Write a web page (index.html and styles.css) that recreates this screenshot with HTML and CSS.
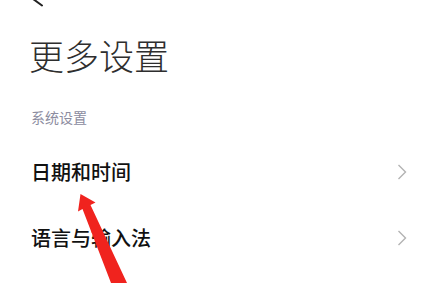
FILE: index.html
```html
<!DOCTYPE html>
<html lang="zh-CN">
<head>
<meta charset="utf-8">
<title>更多设置</title>
<link rel="stylesheet" href="styles.css">
</head>
<body>
<div class="page">
  <div class="header">
    <svg class="back" width="20" height="10" viewBox="0 0 20 10"><path d="M1 -4 L 14 5.5" stroke="#222" stroke-width="2" fill="none" stroke-linecap="round"/></svg>
  </div>
  <h1 class="title">更多设置</h1>
  <div class="section-label">系统设置</div>
  <div class="row">
    <span class="row-text">日期和时间</span>
    <svg class="chev" width="10" height="16" viewBox="0 0 10 16"><path d="M1.5 1 L8.5 8 L1.5 15" fill="none" stroke="#b3b3b3" stroke-width="1.4"/></svg>
  </div>
  <div class="row">
    <span class="row-text">语言与输入法</span>
    <svg class="chev" width="10" height="16" viewBox="0 0 10 16"><path d="M1.5 1 L8.5 8 L1.5 15" fill="none" stroke="#b3b3b3" stroke-width="1.4"/></svg>
  </div>
  <svg class="red-arrow" width="424" height="283" viewBox="0 0 424 283"><polygon points="80.5,194 95.5,202.5 90.5,205 127,283 111,283 82.5,209 78,211.5" fill="#f0231e"/></svg>
</div>
</body>
</html>
```
FILE: styles.css
```css
html, body {
  margin: 0;
  padding: 0;
  background: #ffffff;
}
body {
  font-family: "Noto Sans CJK SC", "Noto Sans", sans-serif;
  width: 424px;
  height: 283px;
  overflow: hidden;
}
.page {
  position: relative;
  width: 424px;
  height: 283px;
  overflow: hidden;
}
.header {
  height: 37px;
  padding-left: 28px;
}
.back {
  display: block;
}
.title {
  margin: 0;
  padding-left: 29px;
  font-size: 35px;
  line-height: 35px;
  font-weight: 300;
  color: #2e2e2e;
}
.section-label {
  margin-top: 38px;
  padding-left: 31px;
  font-size: 14px;
  line-height: 14px;
  color: #8c8ca0;
}
.section-label + .row {
  margin-top: 15px;
}
.row {
  height: 66px;
  display: flex;
  align-items: center;
  justify-content: space-between;
  padding: 0 17px 0 31px;
}
.row-text {
  font-size: 20px;
  line-height: 20px;
  color: #111111;
  font-weight: 500;
}
.chev {
  display: block;
}
.red-arrow {
  position: absolute;
  left: 0;
  top: 0;
  pointer-events: none;
}
```
